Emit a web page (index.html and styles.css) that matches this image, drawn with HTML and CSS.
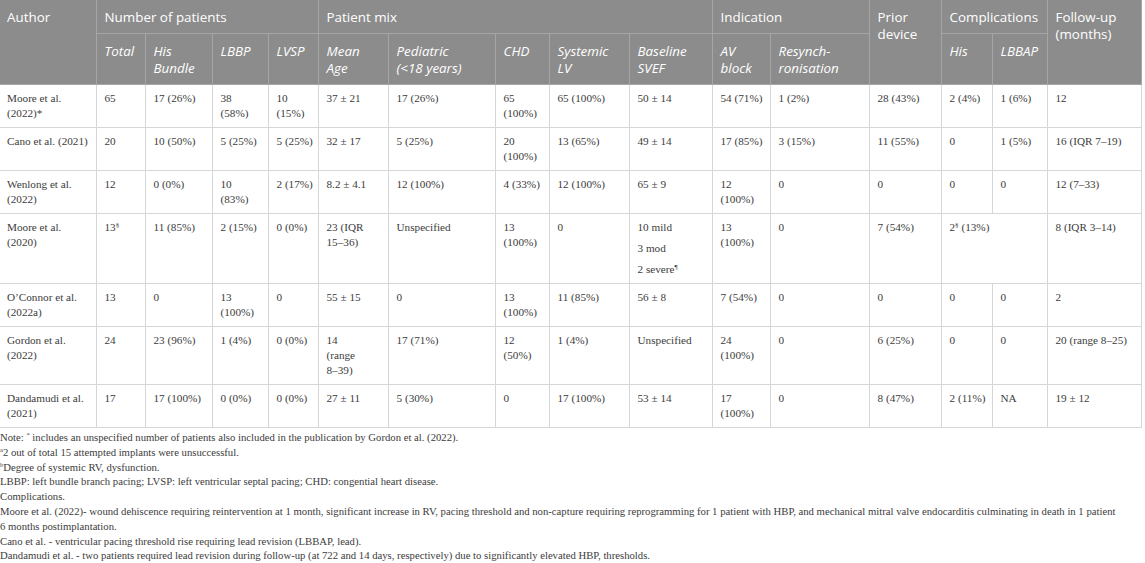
FILE: index.html
```html
<!DOCTYPE html>
<html lang="en">
<head>
<meta charset="utf-8">
<title>Table</title>
<link rel="stylesheet" href="styles.css">
</head>
<body>
<div class="wrap">
<table class="data">
  <colgroup>
    <col class="c-author"><col class="c-total"><col class="c-his"><col class="c-lbbp"><col class="c-lvsp">
    <col class="c-age"><col class="c-ped"><col class="c-chd"><col class="c-sys"><col class="c-svef">
    <col class="c-av"><col class="c-res"><col class="c-prior"><col class="c-chis"><col class="c-clbb"><col class="c-fu">
  </colgroup>
  <thead>
    <tr class="h1">
      <th rowspan="2">Author</th>
      <th colspan="4">Number of patients</th>
      <th colspan="5">Patient mix</th>
      <th colspan="2">Indication</th>
      <th rowspan="2">Prior<br>device</th>
      <th colspan="2">Complications</th>
      <th rowspan="2">Follow-up<br>(months)</th>
    </tr>
    <tr class="h2">
      <th>Total</th>
      <th>His<br>Bundle</th>
      <th>LBBP</th>
      <th>LVSP</th>
      <th>Mean<br>Age</th>
      <th>Pediatric<br>(&lt;18 years)</th>
      <th>CHD</th>
      <th>Systemic<br>LV</th>
      <th>Baseline<br>SVEF</th>
      <th>AV<br>block</th>
      <th>Resynch-<br>ronisation</th>
      <th>His</th>
      <th>LBBAP</th>
    </tr>
  </thead>
  <tbody>
    <tr>
      <td>Moore et al.<br>(2022)*</td><td>65</td><td>17 (26%)</td><td>38<br>(58%)</td><td>10<br>(15%)</td>
      <td>37 ± 21</td><td>17 (26%)</td><td>65<br>(100%)</td><td>65 (100%)</td><td>50 ± 14</td>
      <td>54 (71%)</td><td>1 (2%)</td><td>28 (43%)</td><td>2 (4%)</td><td>1 (6%)</td><td>12</td>
    </tr>
    <tr>
      <td>Cano et al. (2021)</td><td>20</td><td>10 (50%)</td><td>5 (25%)</td><td>5 (25%)</td>
      <td>32 ± 17</td><td>5 (25%)</td><td>20<br>(100%)</td><td>13 (65%)</td><td>49 ± 14</td>
      <td>17 (85%)</td><td>3 (15%)</td><td>11 (55%)</td><td>0</td><td>1 (5%)</td><td>16 (IQR 7–19)</td>
    </tr>
    <tr>
      <td>Wenlong et al.<br>(2022)</td><td>12</td><td>0 (0%)</td><td>10<br>(83%)</td><td>2 (17%)</td>
      <td>8.2 ± 4.1</td><td>12 (100%)</td><td>4 (33%)</td><td>12 (100%)</td><td>65 ± 9</td>
      <td>12<br>(100%)</td><td>0</td><td>0</td><td>0</td><td>0</td><td>12 (7–33)</td>
    </tr>
    <tr>
      <td>Moore et al.<br>(2020)</td><td>13<sup>§</sup></td><td>11 (85%)</td><td>2 (15%)</td><td>0 (0%)</td>
      <td>23 (IQR<br>15–36)</td><td>Unspecified</td><td>13<br>(100%)</td><td>0</td>
      <td><div class="para">10 mild</div><div class="para">3 mod</div><div class="para">2 severe<sup>¶</sup></div></td>
      <td>13<br>(100%)</td><td>0</td><td>7 (54%)</td><td colspan="2">2<sup>§</sup> (13%)</td><td>8 (IQR 3–14)</td>
    </tr>
    <tr>
      <td>O’Connor et al.<br>(2022a)</td><td>13</td><td>0</td><td>13<br>(100%)</td><td>0</td>
      <td>55 ± 15</td><td>0</td><td>13<br>(100%)</td><td>11 (85%)</td><td>56 ± 8</td>
      <td>7 (54%)</td><td>0</td><td>0</td><td>0</td><td>0</td><td>2</td>
    </tr>
    <tr>
      <td>Gordon et al.<br>(2022)</td><td>24</td><td>23 (96%)</td><td>1 (4%)</td><td>0 (0%)</td>
      <td>14<br>(range<br>8–39)</td><td>17 (71%)</td><td>12<br>(50%)</td><td>1 (4%)</td><td>Unspecified</td>
      <td>24<br>(100%)</td><td>0</td><td>6 (25%)</td><td>0</td><td>0</td><td>20 (range 8–25)</td>
    </tr>
    <tr>
      <td>Dandamudi et al.<br>(2021)</td><td>17</td><td>17 (100%)</td><td>0 (0%)</td><td>0 (0%)</td>
      <td>27 ± 11</td><td>5 (30%)</td><td>0</td><td>17 (100%)</td><td>53 ± 14</td>
      <td>17<br>(100%)</td><td>0</td><td>8 (47%)</td><td>2 (11%)</td><td>NA</td><td>19 ± 12</td>
    </tr>
  </tbody>
</table>
<div class="notes">
  <p>Note: <sup>*</sup> includes an unspecified number of patients also included in the publication by Gordon et al. (2022).</p>
  <p><sup>a</sup>2 out of total 15 attempted implants were unsuccessful.</p>
  <p><sup>b</sup>Degree of systemic RV, dysfunction.</p>
  <p>LBBP: left bundle branch pacing; LVSP: left ventricular septal pacing; CHD: congential heart disease.</p>
  <p>Complications.</p>
  <p>Moore et al. (2022)- wound dehiscence requiring reintervention at 1 month, significant increase in RV, pacing threshold and non-capture requiring reprogramming for 1 patient with HBP, and mechanical mitral valve endocarditis culminating in death in 1 patient<br>6 months postimplantation.</p>
  <p>Cano et al. - ventricular pacing threshold rise requiring lead revision (LBBAP, lead).</p>
  <p>Dandamudi et al. - two patients required lead revision during follow-up (at 722 and 14 days, respectively) due to significantly elevated HBP, thresholds.</p>
</div>
</div>
</body>
</html>
```

FILE: styles.css
```css
html, body {
  margin: 0;
  padding: 0;
  background: #ffffff;
}

.wrap {
  width: 1141px;
}

.data {
  width: 1141px;
  border-collapse: collapse;
  table-layout: fixed;
}

.c-author { width: 96px; }
.c-total { width: 49px; }
.c-his { width: 67px; }
.c-lbbp { width: 56px; }
.c-lvsp { width: 50px; }
.c-age { width: 70px; }
.c-ped { width: 107px; }
.c-chd { width: 54px; }
.c-sys { width: 80px; }
.c-svef { width: 83px; }
.c-av { width: 58px; }
.c-res { width: 99px; }
.c-prior { width: 72px; }
.c-chis { width: 51px; }
.c-clbb { width: 55px; }
.c-fu { width: 94px; }

.data th {
  background: #8c8c8c;
  color: #ffffff;
  font-family: "Open Sans", "Liberation Sans", sans-serif;
  font-size: 13.4px;
  font-weight: normal;
  line-height: 17px;
  text-align: left;
  vertical-align: top;
  padding: 9px 8px 7px;
  border: 1px solid #a6a6a6;
  white-space: nowrap;
}

.data thead tr.h1 th:first-child {
  padding-left: 7px;
  border-left: none;
}

.data thead tr.h2 th {
  font-style: italic;
}

.data thead tr.h1 th {
  border-top: none;
}

.data td {
  font-family: "Liberation Serif", "Times New Roman", serif;
  font-size: 11.2px;
  line-height: 15px;
  color: #3c3c3c;
  text-align: left;
  vertical-align: top;
  padding: 6px 8px 6px;
  border: 1px solid #d6d6d6;
  white-space: nowrap;
}

.data tbody td:first-child {
  padding-left: 7px;
  border-left: none;
}

.data sup {
  font-size: 7px;
  line-height: 0;
  vertical-align: 4px;
}

.para + .para {
  margin-top: 6px;
}

.notes {
  padding-top: 2px;
  font-family: "Liberation Serif", "Times New Roman", serif;
  font-size: 10.7px;
  line-height: 14.8px;
  color: #3c3c3c;
  white-space: nowrap;
}

.notes p {
  margin: 0;
}

.notes sup {
  font-size: 6.5px;
  line-height: 0;
  vertical-align: 4px;
}
```
